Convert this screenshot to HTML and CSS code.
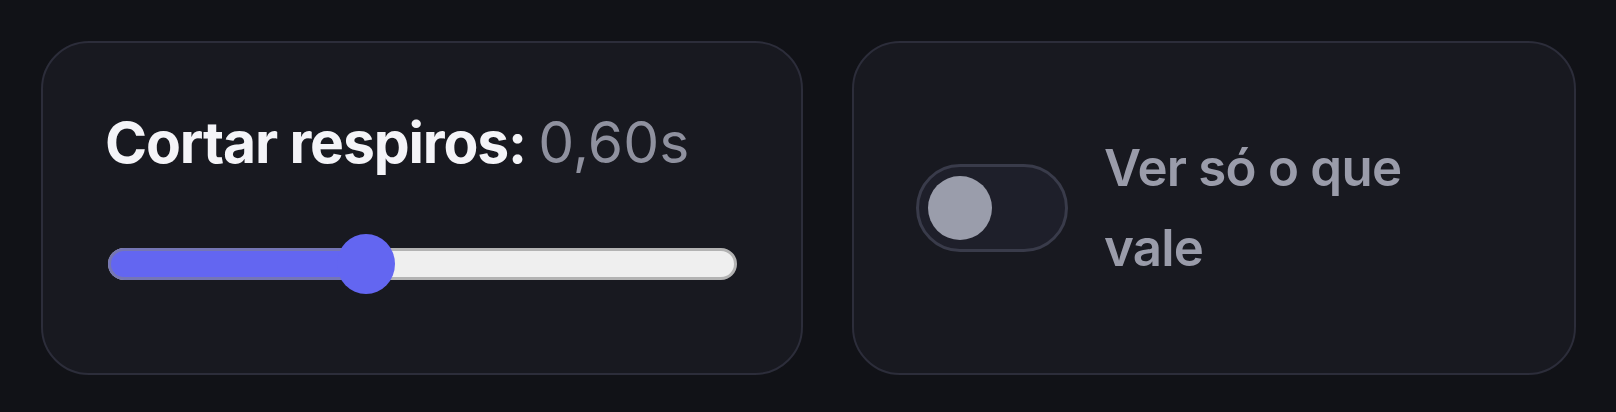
FILE: index.html
```html
<!DOCTYPE html>
<html lang="pt">
<head>
  <meta charset="UTF-8">
  <title>Cortar respiros</title>
  <link rel="stylesheet" href="styles.css">
</head>
<body>
  <div class="panel">
    <div class="card card-slider">
      <h2 class="title">Cortar respiros: <span class="value">0,60s</span></h2>
      <div class="slider">
        <div class="slider-track">
          <div class="slider-fill" style="width: 41%"></div>
        </div>
        <div class="slider-thumb" style="left: 41%"></div>
      </div>
    </div>

    <div class="card card-toggle">
      <div class="toggle">
        <span class="toggle-knob"></span>
      </div>
      <span class="toggle-label">Ver só o que vale</span>
    </div>
  </div>
</body>
</html>
```

FILE: styles.css
```css
body {
  margin: 0;
  background: #111217;
  font-family: Inter, "Noto Sans", sans-serif;
}
.panel {
  display: grid;
  grid-template-columns: 762px 724px;
  gap: 49px;
  padding: 41px 40px 37px 41px;
}
.card {
  box-sizing: border-box;
  height: 334px;
  background: #181920;
  border: 2px solid #2c2d3a;
  border-radius: 48px;
}
.card-slider {
  padding: 64px 62px 0 62px;
}
.title {
  margin: 0;
  font-size: 57px;
  line-height: 71px;
  font-weight: 700;
  letter-spacing: -0.02em;
  color: #f4f4f8;
}
.value {
  font-weight: 400;
  color: #8f919f;
  letter-spacing: 0;
}
.slider {
  position: relative;
  height: 60px;
  margin: 56px 2px 0 3px;
}
.slider-track {
  position: absolute;
  left: 0;
  right: 0;
  top: 14px;
  height: 32px;
  box-sizing: border-box;
  background: #efefef;
  border: 3px solid #b3b3b3;
  border-radius: 16px;
}
.slider-fill {
  position: absolute;
  top: -3px;
  bottom: -3px;
  left: -3px;
  box-sizing: border-box;
  background: #6366f1;
  border: 3px solid #7576b4;
  border-right: none;
  border-radius: 16px 0 0 16px;
}
.slider-thumb {
  position: absolute;
  top: 0;
  width: 58px;
  height: 60px;
  margin-left: -29px;
  border-radius: 50%;
  background: #6366f1;
}
.card-toggle {
  display: flex;
  align-items: center;
  gap: 36px;
  padding: 0 62px;
}
.toggle {
  box-sizing: border-box;
  flex: none;
  width: 152px;
  height: 88px;
  padding: 9px;
  background: #1e1f2a;
  border: 3px solid #393b4a;
  border-radius: 44px;
}
.toggle-knob {
  display: block;
  width: 64px;
  height: 64px;
  border-radius: 50%;
  background: #9a9dab;
}
.toggle-label {
  max-width: 330px;
  font-size: 51px;
  line-height: 80px;
  font-weight: 600;
  letter-spacing: -0.015em;
  color: #9a9caa;
}
```
